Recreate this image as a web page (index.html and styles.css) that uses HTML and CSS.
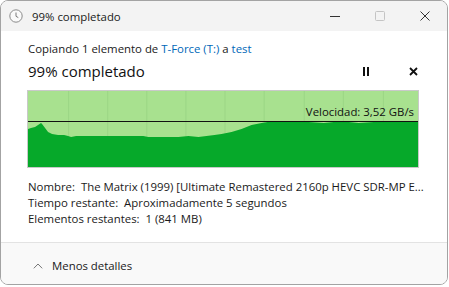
FILE: index.html
```html
<!DOCTYPE html>
<html lang="es">
<head>
<meta charset="utf-8">
<link rel="stylesheet" href="styles.css">
</head>
<body>
<div class="window">
  <div class="titlebar">
    <svg class="clock" width="14" height="14" viewBox="0 0 14 14">
      <circle cx="7" cy="7" r="6.2" fill="#fafafa" stroke="#8a8a8a" stroke-width="1"/>
      <path d="M7 3.5V7.3L9.3 8.6" fill="none" stroke="#7a7a7a" stroke-width="1"/>
    </svg>
    <span class="title">99% completado</span>
    <div class="caption">
      <span class="cbtn"><svg width="10" height="10" viewBox="0 0 10 10"><path d="M0 5.5H10" stroke="#333" stroke-width="1"/></svg></span>
      <span class="cbtn"><svg width="10" height="10" viewBox="0 0 10 10"><rect x="0.5" y="0.5" width="9" height="9" rx="1" fill="none" stroke="#c4c4c4"/></svg></span>
      <span class="cbtn"><svg width="10" height="10" viewBox="0 0 10 10"><path d="M0.5 0.5L9.5 9.5M9.5 0.5L0.5 9.5" stroke="#333" stroke-width="1"/></svg></span>
    </div>
  </div>
  <div class="content">
    <div class="line1">Copiando 1 elemento de <span class="link">T-Force (T:)</span> a <span class="link">test</span></div>
    <div class="headrow">
      <span class="big">99% completado</span>
      <div class="actions">
        <svg width="8" height="9" viewBox="0 0 8 9"><rect x="1" y="0" width="2" height="9" fill="#111"/><rect x="5" y="0" width="2" height="9" fill="#111"/></svg>
        <svg width="9" height="9" viewBox="0 0 9 9"><path d="M1 1L8 8M8 1L1 8" stroke="#111" stroke-width="1.8"/></svg>
      </div>
    </div>
    <div class="graph">
      <svg class="chart" width="389" height="76" viewBox="0 0 389 76" preserveAspectRatio="none">
        <rect x="0" y="0" width="389" height="76" fill="#a8e18f"/>
        <g stroke="#9bd685" stroke-width="1">
          <line x1="40.5" y1="0" x2="40.5" y2="76"/>
          <line x1="79.5" y1="0" x2="79.5" y2="76"/>
          <line x1="118.5" y1="0" x2="118.5" y2="76"/>
          <line x1="157.5" y1="0" x2="157.5" y2="76"/>
          <line x1="196.5" y1="0" x2="196.5" y2="76"/>
          <line x1="235.5" y1="0" x2="235.5" y2="76"/>
          <line x1="275.5" y1="0" x2="275.5" y2="76"/>
          <line x1="314.5" y1="0" x2="314.5" y2="76"/>
          <line x1="354.5" y1="0" x2="354.5" y2="76"/>
        </g>
        <polygon fill="#06a92a" points="0,38 3,37 7,36 10,34 13,32 14,33 17,37 20,41 24,43 30,44 36,44 40,45 43,46 48,45 60,45 90,45 115,45 120,46 135,46 150,46 160,45 170,46 178,45 186,44 193,43 203,41 213,38 223,34 233,32 245,30 260,31 280,31 295,32 305,31 320,31 330,32 345,31 360,31 375,31 389,31 389,76 0,76"/>
        <line x1="0" y1="30.5" x2="389" y2="30.5" stroke="#111" stroke-width="1"/>
      </svg>
      <span class="speed">Velocidad: 3,52 GB/s</span>
    </div>
    <div class="info">
      <div>Nombre:&nbsp; The Matrix (1999) [Ultimate Remastered 2160p HEVC SDR-MP E...</div>
      <div>Tiempo restante:&nbsp; Aproximadamente 5 segundos</div>
      <div>Elementos restantes:&nbsp; 1 (841 MB)</div>
    </div>
  </div>
  <div class="footer">
    <svg width="10" height="6" viewBox="0 0 10 6"><path d="M0.8 5.3L5 1L9.2 5.3" fill="none" stroke="#777" stroke-width="1"/></svg>
    <span>Menos detalles</span>
  </div>
</div>
</body>
</html>
```

FILE: styles.css
```css
* { box-sizing: border-box; }
html, body { margin: 0; padding: 0; background: #ffffff; }
body {
  font-family: "Segoe UI", "Open Sans", "Noto Sans", sans-serif;
  font-size: 11.4px;
  color: #1a1a1a;
}
.window {
  width: 448px;
  height: 285px;
  border: 1px solid #a3a3a3;
  border-radius: 8px;
  overflow: hidden;
  display: flex;
  flex-direction: column;
  background: #ffffff;
}
.titlebar {
  height: 30px;
  flex: none;
  background: #f3f3f3;
  display: flex;
  align-items: center;
  padding-left: 8px;
}
.clock { flex: none; }
.title {
  margin-left: 9px;
  color: #1a1a1a;
}
.caption {
  margin-left: auto;
  display: flex;
  height: 100%;
}
.cbtn {
  width: 45px;
  height: 100%;
  display: flex;
  align-items: center;
  justify-content: center;
}
.content {
  flex: 1;
  padding: 10px 0 0 26px;
}
.line1 {
  height: 16px;
  line-height: 16px;
  padding-left: 1px;
}
.link { color: #0067b8; }
.headrow {
  display: flex;
  align-items: center;
  height: 28px;
  padding-right: 29px;
  padding-left: 1px;
}
.big {
  font-size: 15px;
  color: #111;
}
.actions {
  margin-left: auto;
  display: flex;
  align-items: center;
  gap: 39px;
}
.graph {
  position: relative;
  margin-top: 5px;
  width: 392px;
  height: 78px;
  border: 1px solid #c9c9c9;
}
.chart { display: block; width: 390px; }
.speed {
  position: absolute;
  right: 4px;
  top: 14px;
  line-height: 14px;
  color: #111;
}
.info {
  margin-top: 11px;
  padding-left: 1px;
}
.info div {
  height: 16px;
  line-height: 16px;
}
.footer {
  flex: none;
  height: 42px;
  border-top: 1px solid #e3e3e3;
  background: #f9f9f9;
  display: flex;
  align-items: center;
  padding-left: 32px;
  padding-top: 4px;
  gap: 9px;
}
```
